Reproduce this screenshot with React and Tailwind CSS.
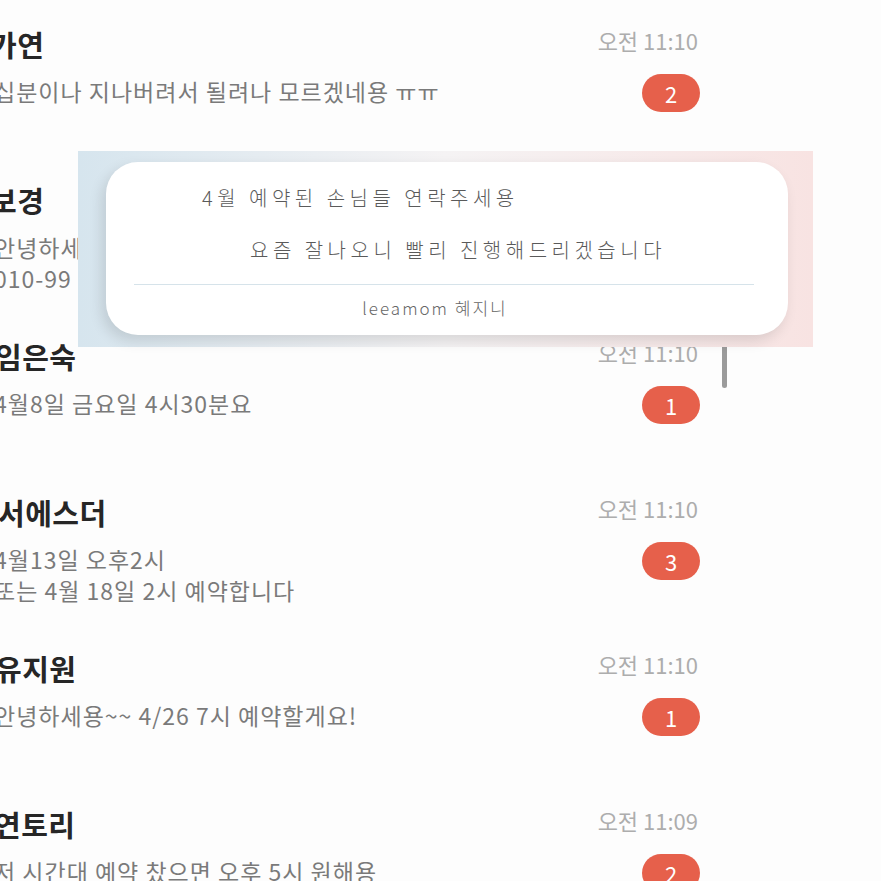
import React from 'react';

const chats = [
  { name: '가연', nameShift: '-ml-[10px]', lines: ['십분이나 지나버려서 될려나 모르겠네용 ㅠㅠ'], time: '오전 11:10', count: 2 },
  { name: '보경', nameShift: '-ml-[10px]', lines: ['안녕하세요~', '010-99'], time: '오전 11:10', count: 1 },
  { name: '임은숙', nameShift: '-ml-[5px]', lines: ['4월8일 금요일 4시30분요'], time: '오전 11:10', count: 1 },
  { name: '서에스더', nameShift: '-ml-[2px]', lines: ['4월13일 오후2시', '또는 4월 18일 2시 예약합니다'], time: '오전 11:10', count: 3 },
  { name: '유지원', nameShift: '-ml-[5px]', lines: ['안녕하세용~~ 4/26 7시 예약할게요!'], time: '오전 11:10', count: 1 },
  { name: '연토리', nameShift: '-ml-[6px]', lines: ['저 시간대 예약 찼으면 오후 5시 원해용'], time: '오전 11:09', count: 2 },
];

const ChatRow = ({ chat }) => (
  <div className="flex h-[156px] shrink-0">
    <div className="flex-1 min-w-0 pt-[24px]">
      <div className={`${chat.nameShift} text-[29px] leading-[40px] tracking-[0.5px] font-bold text-[#262626] whitespace-nowrap`}>
        {chat.name}
      </div>
      <div className="-ml-[6px] mt-[12px]">
        {chat.lines.map((line, i) => (
          <div key={i} className="text-[23px] leading-[31px] tracking-[1px] text-[#7a7a7a] whitespace-nowrap">
            {line}
          </div>
        ))}
      </div>
    </div>
    <div className="w-[104px] mr-[181px] flex flex-col items-end pt-[26px]">
      <div className="mr-[2px] text-[22px] leading-[28px] text-[#adadad] whitespace-nowrap">{chat.time}</div>
      <div className="mt-[20px] h-[38px] w-[58px] rounded-full bg-[#e6604b] flex items-center justify-center text-white text-[22px]">
        {chat.count}
      </div>
    </div>
  </div>
);

export default function App() {
  return (
    <div
      className="relative w-[881px] h-[881px] overflow-hidden bg-[#fdfdfd]"
      style={{ fontFamily: '"Noto Sans CJK KR", "Noto Sans", sans-serif' }}
    >
      <div className="flex flex-col">
        {chats.map((chat, i) => (
          <ChatRow key={i} chat={chat} />
        ))}
      </div>

      {/* scroll indicator */}
      <div className="absolute left-[722px] top-[335px] w-[5px] h-[53px] rounded-full bg-[#9b9b9b]" />

      {/* notification popup */}
      <div className="absolute left-[78px] top-[151px] w-[735px] h-[196px] bg-gradient-to-r from-[#d6e5ee] via-[#f5f3f4] to-[#f8e3e2]">
        <div className="ml-[28px] mt-[11px] w-[682px] h-[173px] rounded-[32px] bg-white shadow-[-4px_6px_14px_rgba(0,0,0,0.12)] pt-[24px] text-[#5a5a5a] font-light">
          <div className="pl-[96px] text-[20px] leading-[24px] tracking-[4.5px] whitespace-nowrap">
            4월 예약된 손님들 연락주세용
          </div>
          <div className="pl-[144px] mt-[28px] text-[20px] leading-[24px] tracking-[4.5px] whitespace-nowrap">
            요즘 잘나오니 빨리 진행해드리겠습니다
          </div>
          <div className="ml-[28px] mr-[34px] mt-[22px] h-px bg-[#d6e3ea]" />
          <div className="mt-[12px] pr-[24px] text-center text-[17px] leading-[22px] tracking-[2px] text-[#666]">
            leeamom 혜지니
          </div>
        </div>
      </div>
    </div>
  );
}
